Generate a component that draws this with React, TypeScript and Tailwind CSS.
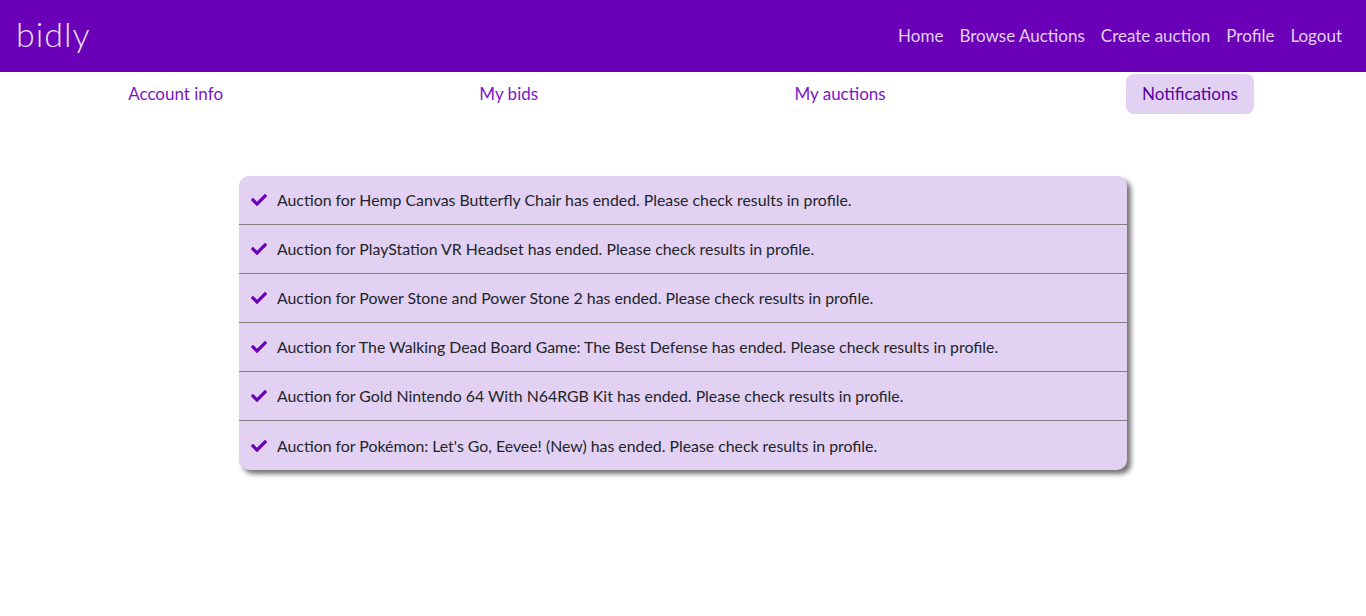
import React from 'react';

const notifications = [
  'Hemp Canvas Butterfly Chair',
  'PlayStation VR Headset',
  'Power Stone and Power Stone 2',
  'The Walking Dead Board Game: The Best Defense',
  'Gold Nintendo 64 With N64RGB Kit',
  "Pokémon: Let's Go, Eevee! (New)",
];

function CheckIcon() {
  return (
    <svg viewBox="0 0 512 512" className="w-4 h-4 shrink-0" fill="#6a00b8">
      <path d="M173.898 439.404l-166.4-166.4c-9.997-9.997-9.997-26.206 0-36.204l36.203-36.204c9.997-9.998 26.207-9.998 36.204 0L192 312.69 432.095 72.596c9.997-9.997 26.207-9.997 36.204 0l36.203 36.204c9.997 9.997 9.997 26.206 0 36.204l-294.4 294.401c-9.998 9.997-26.207 9.997-36.204-.001z" />
    </svg>
  );
}

export default function App() {
  const tabs = ['Account info', 'My bids', 'My auctions', 'Notifications'];

  return (
    <div className="min-h-screen bg-white" style={{ fontFamily: 'Lato, sans-serif' }}>
      {/* Top navbar */}
      <header className="h-[72px] bg-[#6a00b8] flex items-center justify-between px-4">
        <span className="text-[34px] text-[#ece0f8] font-light tracking-[1px] leading-none pb-1">bidly</span>
        <nav className="flex items-center text-[17px] text-[#e2d1f2]">
          {['Home', 'Browse Auctions', 'Create auction', 'Profile', 'Logout'].map((l) => (
            <a key={l} className="px-2 py-2">
              {l}
            </a>
          ))}
        </nav>
      </header>

      {/* Profile tabs */}
      <div className="flex justify-around pt-[2px]">
        {tabs.map((t) => (
          <a
            key={t}
            className={
              'px-4 h-10 flex items-center rounded-lg text-[17px] ' +
              (t === 'Notifications' ? 'bg-[#e2d1f2] text-[#5a00a0]' : 'text-[#7d14c8]')
            }
          >
            {t}
          </a>
        ))}
      </div>

      {/* Notification list */}
      <div className="mt-[62px] mx-auto w-[888px] bg-[#e2d1f2] rounded-[10px] shadow-[4px_4px_5px_rgba(0,0,0,0.55)]">
        {notifications.map((n, i) => (
          <div
            key={n}
            className={
              'h-[49px] flex items-center gap-[10px] pl-3 text-[15.85px] text-[#212529] ' +
              (i < notifications.length - 1 ? 'border-b border-[#808080]' : '')
            }
          >
            <CheckIcon />
            <span>Auction for {n} has ended. Please check results in profile.</span>
          </div>
        ))}
      </div>
    </div>
  );
}
